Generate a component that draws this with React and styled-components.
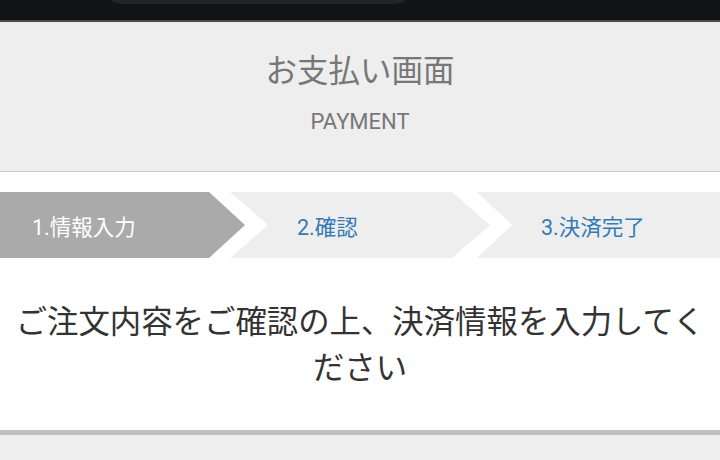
import React from 'react';
import styled, { createGlobalStyle } from 'styled-components';

const colors = {
  topBar: '#101417',
  pill: '#1f272d',
  topLine: '#4a4c50',
  panel: '#eeeeee',
  rule: '#c8c8c8',
  muted: '#777777',
  stepDone: '#aaaaaa',
  link: '#337ab7',
  text: '#333333',
};

const GlobalStyle = createGlobalStyle`
  html, body {
    margin: 0;
    padding: 0;
    background: ${colors.panel};
  }
  body {
    font-family: Roboto, "Noto Sans CJK JP", sans-serif;
  }
`;

const Page = styled.div`
  display: flex;
  flex-direction: column;
  min-height: 100vh;
  background: ${colors.panel};
`;

const TopBar = styled.div`
  height: 20px;
  background: ${colors.topBar};
  border-bottom: 2px solid ${colors.topLine};
  display: flex;
  align-items: flex-start;
`;

const Pill = styled.div`
  width: 293px;
  height: 4px;
  margin-left: 112px;
  background: ${colors.pill};
  border-radius: 0 0 14px 14px / 0 0 4px 4px;
`;

const Header = styled.header`
  display: flex;
  flex-direction: column;
  align-items: center;
  padding: 30px 0 35px;
  border-bottom: 1px solid ${colors.rule};
  color: ${colors.muted};
`;

const Title = styled.h1`
  margin: 0;
  font-size: 31.5px;
  line-height: 40px;
  font-weight: 400;
`;

const Subtitle = styled.div`
  margin-top: 15px;
  font-size: 22px;
  line-height: 29px;
`;

const Content = styled.section`
  background: #fff;
  padding-top: 20px;
  border-bottom: 5px solid #c0c0c0;
`;

const Steps = styled.ol`
  display: flex;
  list-style: none;
  margin: 0;
  padding: 0;
  height: 66px;
`;

const Step = styled.li`
  display: flex;
  align-items: center;
  box-sizing: border-box;
  flex: ${(p) => (p.$grow ? '1' : `0 0 ${p.$width}px`)};
  margin-left: ${(p) => p.$offset || 0}px;
  padding-left: ${(p) => p.$pad}px;
  padding-top: 1px;
  background: ${(p) => (p.$active ? colors.stepDone : colors.panel)};
  color: ${(p) => (p.$active ? '#fff' : colors.link)};
  font-size: 21.5px;
  clip-path: ${(p) => p.$shape};
`;

const Message = styled.p`
  margin: 0;
  padding: 42px 12px 38px;
  text-align: center;
  font-size: 31.4px;
  line-height: 46px;
  color: ${colors.text};
`;

const Rest = styled.div`
  flex: 1;
  background: ${colors.panel};
`;

const steps = [
  {
    label: '1.情報入力',
    active: true,
    width: 245,
    pad: 32,
    shape: 'polygon(0 0, 209px 0, 100% 50%, 209px 100%, 0 100%)',
  },
  {
    label: '2.確認',
    width: 260,
    offset: -15,
    pad: 67,
    shape:
      'polygon(0 0, 222px 0, 100% 50%, 222px 100%, 0 100%, 38px 50%)',
  },
  {
    label: '3.決済完了',
    grow: true,
    offset: -13,
    pad: 64,
    shape: 'polygon(0 0, 100% 0, 100% 100%, 0 100%, 35px 50%)',
  },
];

export default function App() {
  return (
    <Page>
      <GlobalStyle />
      <TopBar>
        <Pill />
      </TopBar>
      <Header>
        <Title>お支払い画面</Title>
        <Subtitle>PAYMENT</Subtitle>
      </Header>
      <Content>
        <Steps>
          {steps.map((s) => (
            <Step
              key={s.label}
              $active={s.active}
              $width={s.width}
              $grow={s.grow}
              $offset={s.offset}
              $pad={s.pad}
              $shape={s.shape}
            >
              {s.label}
            </Step>
          ))}
        </Steps>
        <Message>
          ご注文内容をご確認の上、決済情報を入力してください
        </Message>
      </Content>
      <Rest />
    </Page>
  );
}
